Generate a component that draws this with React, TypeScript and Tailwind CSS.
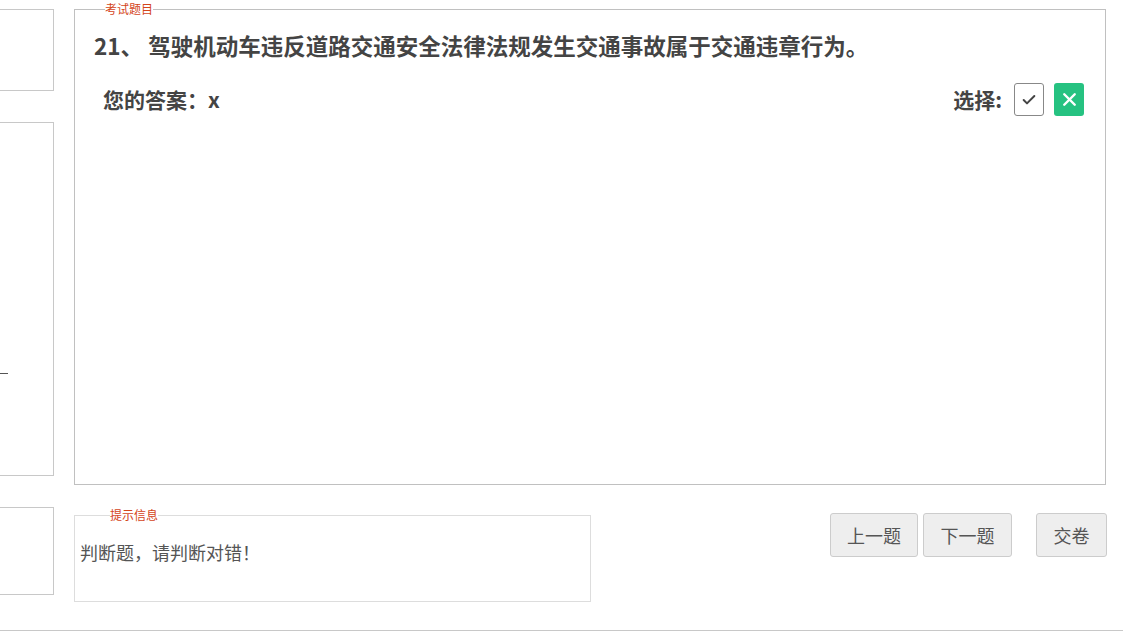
import { Check, X } from "lucide-react";

const FONT = { fontFamily: '"Noto Sans CJK SC", "Noto Sans", sans-serif' };

function NavButton({ label, className = "" }: { label: string; className?: string }) {
  return (
    <button
      className={`h-[44px] rounded-[3px] border border-[#cccccc] bg-[#eeeeee] text-[18px] text-[#555555] ${className}`}
    >
      {label}
    </button>
  );
}

export default function App() {
  return (
    <div className="h-[631px] w-[1123px] overflow-hidden border-b border-[#c8c8c8] bg-white" style={FONT}>
      <div className="flex">
        {/* 左侧 — 被裁掉的面板 */}
        <div className="flex w-[54px] shrink-0 flex-col gap-[31px] pt-[9px]">
          <div className="h-[82px] border-y border-r border-[#c8c8c8]" />
          <div className="relative h-[354px] border-y border-r border-[#c8c8c8]">
            <div className="absolute left-0 top-[250px] h-px w-[8px] bg-[#555555]" />
          </div>
          <div className="h-[88px] border-y border-r border-[#c8c8c8]" />
        </div>

        {/* 右侧 — 题目 */}
        <div className="ml-[20px] flex w-[1032px] flex-col pt-[2px]">
          <fieldset className="h-[483px] border border-[#c0c0c0] p-0">
            <legend className="ml-[30px] p-0 text-[12px] leading-[14px] text-[#d4451b]">考试题目</legend>
            <div className="pt-[14px]">
              <div className="pl-[19px] text-[22.5px] font-bold leading-[30px] text-[#444444]">
                21、 驾驶机动车违反道路交通安全法律法规发生交通事故属于交通违章行为。
              </div>
              <div className="mt-[23px] flex items-center justify-between pl-[28px] pr-[21px]">
                <div className="text-[21px] font-bold text-[#444444]">您的答案：x</div>
                <div className="flex items-center">
                  <span className="mr-[12px] text-[21px] font-bold text-[#444444]">选择:</span>
                  <button className="flex h-[33px] w-[30px] items-center justify-center rounded-[3px] border border-[#888888] bg-white">
                    <Check size={16} strokeWidth={3} className="text-[#444444]" />
                  </button>
                  <button className="ml-[10px] flex h-[33px] w-[30px] items-center justify-center rounded-[3px] bg-[#26c281]">
                    <X size={21} strokeWidth={2.75} className="text-white" />
                  </button>
                </div>
              </div>
            </div>
          </fieldset>

          <div className="mt-[23px] flex items-start">
            <fieldset className="h-[94px] w-[517px] border border-[#dddddd] p-0">
              <legend className="ml-[35px] p-0 text-[12px] leading-[14px] text-[#d4451b]">提示信息</legend>
              <div className="pl-[5px] pt-[16px] text-[18px] leading-[28px] text-[#555555]">
                判断题，请判断对错！
              </div>
            </fieldset>
            <div className="ml-auto mr-[-1px] mt-[5px] flex">
              <NavButton label="上一题" className="w-[88px]" />
              <NavButton label="下一题" className="ml-[5px] w-[89px]" />
              <NavButton label="交卷" className="ml-[24px] w-[71px]" />
            </div>
          </div>
        </div>
      </div>
    </div>
  );
}
